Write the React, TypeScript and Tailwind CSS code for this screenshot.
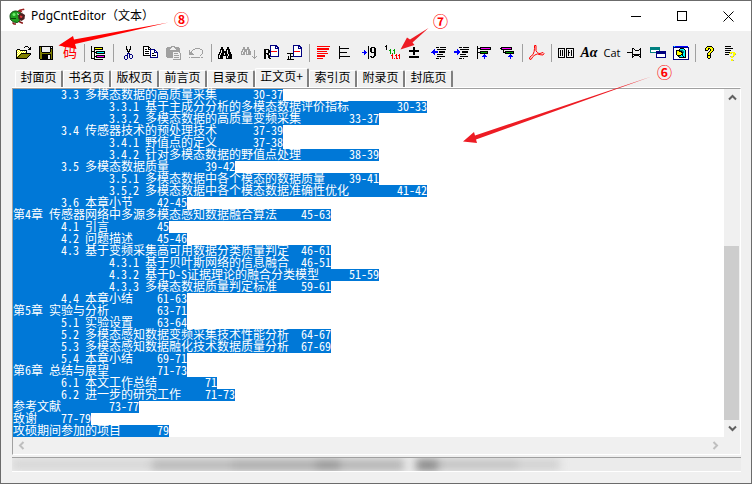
import { useState, type ReactNode } from "react";

const LINES = [
  "\t3.3 多模态数据的高质量采集\t30-37",
  "\t\t3.3.1 基于主成分分析的多模态数据评价指标\t30-33",
  "\t\t3.3.2 多模态数据的高质量变频采集\t33-37",
  "\t3.4 传感器技术的预处理技术\t37-39",
  "\t\t3.4.1 野值点的定义\t37-38",
  "\t\t3.4.2 针对多模态数据的野值点处理\t38-39",
  "\t3.5 多模态数据质量\t39-42",
  "\t\t3.5.1 多模态数据中各个模态的数据质量\t39-41",
  "\t\t3.5.2 多模态数据中各个模态数据准确性优化\t41-42",
  "\t3.6 本章小节\t42-45",
  "第4章 传感器网络中多源多模态感知数据融合算法\t45-63",
  "\t4.1 引言\t45",
  "\t4.2 问题描述\t45-46",
  "\t4.3 基于变频采集高可用数据分类质量判定\t46-61",
  "\t\t4.3.1 基于贝叶斯网络的信息融合\t46-51",
  "\t\t4.3.2 基于D-S证据理论的融合分类模型\t51-59",
  "\t\t4.3.3 多模态数据质量判定标准\t59-61",
  "\t4.4 本章小结\t61-63",
  "第5章 实验与分析\t63-71",
  "\t5.1 实验设置\t63-64",
  "\t5.2 多模态感知数据变频采集技术性能分析\t64-67",
  "\t5.3 多模态感知数据融化技术数据质量分析\t67-69",
  "\t5.4 本章小结\t69-71",
  "第6章 总结与展望\t71-73",
  "\t6.1 本文工作总结\t71",
  "\t6.2 进一步的研究工作\t71-73",
  "参考文献\t73-77",
  "致谢\t77-79",
  "攻硕期间参加的项目\t79",
];

/* Width of a line in a 12px monospaced face: half-width 6, full-width 12, tab stops every 48. */
function lineWidth(line: string) {
  let w = 0;
  for (const c of line) {
    if (c === "\t") w = (Math.floor(w / 48) + 1) * 48;
    else w += c.charCodeAt(0) > 255 ? 12 : 6;
  }
  return w;
}

const TABS = ["封面页", "书名页", "版权页", "前言页", "目录页", "正文页+", "索引页", "附录页", "封底页"];

const PALETTE: Record<string, string> = {
  K: "#000000",
  W: "#ffffff",
  Y: "#ffff00",
  O: "#808000",
  G: "#a0a0a0",
  L: "#f0f0f0",
  N: "#000080",
  B: "#0000ff",
  R: "#ff0000",
  M: "#ff00ff",
  C: "#00ffff",
  T: "#008080",
  E: "#00a000",
};

/* Draws a small bitmap glyph, one character per pixel. */
function Pixels({ rows }: { rows: string[] }) {
  return (
    <svg width="16" height="16" viewBox="0 0 16 16" shapeRendering="crispEdges" aria-hidden="true">
      {rows.flatMap((row, y) =>
        [...row].map((c, x) =>
          c === "." ? null : <rect key={`${x}-${y}`} x={x} y={y} width="1" height="1" fill={PALETTE[c]} />,
        ),
      )}
    </svg>
  );
}

const OPEN = [
  "................",
  ".........KKK....",
  "........K...K.K.",
  ".............KK.",
  ".KKK........KKK.",
  "KYWYKKKKKKK.....",
  "KWYWYWYWYWK.....",
  "KYWYWYWYWYK.....",
  "KWYWYKKKKKKKKKK.",
  "KYWYKOOOOOOOOOK.",
  "KWYKOOOOOOOOOK..",
  "KYKOOOOOOOOOK...",
  "KKOOOOOOOOOK....",
  "KKKKKKKKKKK.....",
];
const SAVE = [
  "................",
  "KKKKKKKKKKKKKK..",
  "KOKLLLLLLLLKLK..",
  "KOKLLLLLLLLKKK..",
  "KOKLLLLLLLLKOK..",
  "KOKLLLLLLLLKOK..",
  "KOKLLLLLLLLKOK..",
  "KOOKKKKKKKKOOK..",
  "KOOOOOOOOOOOOK..",
  "KOOKKKKKKKKKOK..",
  "KOOKKKKKKLLKOK..",
  "KOOKKKKKKLLKOK..",
  "KOOKKKKKKLLKOK..",
  "KOOKKKKKKLLKOK..",
  ".KKKKKKKKKKKKK..",
];
const TREE = [
  "................",
  "K...............",
  "K..KKKKKKKKK....",
  "K..KYYYYYYYK....",
  "K..KKKKKKKKK....",
  "K..K............",
  "KKKK.KKKKKKKKK..",
  "K..KKKCCCCCCCK..",
  "K..K.KKKKKKKKK..",
  "K..K............",
  "K..K.KKKKKKKKK..",
  "K..KKKMMMMMMMK..",
  "K..K.KKKKKKKKK..",
  "KKKK............",
  "...KKKKKKKKK....",
];
const CUT = [
  "................",
  "......K...K.....",
  "......K...K.....",
  "......K...K.....",
  "......KK.KK.....",
  ".......K.K......",
  ".......KKK......",
  "........K.......",
  ".......NNN......",
  ".......N.NNN....",
  ".....NNN.N..N...",
  "....N..N.N..N...",
  "....N..N.N..N...",
  "....N..N..NN....",
  ".....NN.........",
];
const COPY = [
  "................",
  "KKKKKK..........",
  "KWWWWKK.........",
  "KWWWWKWK........",
  "KWKKWKKNNNNN....",
  "KWWWWWWNWWWNN...",
  "KWKKKKWNWWWNWN..",
  "KWWWWWWNWWWNNNN.",
  "KWKKKKWNWKKWWWN.",
  "KWWWWWWNWWWWWWN.",
  "KKKKKKKNWKKKKWN.",
  ".......NWWWWWWN.",
  ".......NNNNNNNN.",
];
const PASTE = [
  "................",
  ".....GGGG.......",
  ".GGGGGLLGGGGG...",
  "GGGGGLLLLGGGGG..",
  "GGGGLLLLLLGGGG..",
  "GGGGGGGGGGGGGG..",
  "GGGGGGGGGGGGGG..",
  "GGGGGGGLLLLLLG..",
  "GGGGGGGLGGGGLLG.",
  "GGGGGGGLLLLLLLG.",
  "GGGGGGGLGGGGGLG.",
  "GGGGGGGLLLLLLLG.",
  ".GGGGGGLGGGGGLG.",
  ".......LLLLLLLG.",
  ".......GGGGGGGG.",
];
const UNDO = [
  "................",
  "................",
  "................",
  "......GGGGG.....",
  "....GG.....GG...",
  "G..G.........G..",
  "G.G..........G..",
  "GGG..........G..",
  "GGGG.........G..",
  "GGGGG.......G...",
  "...........G....",
  "................",
  "G.GGGGGGGGG.GG..",
  "................",
];
const FIND = [
  "................",
  "................",
  "...KK....KK.....",
  "...KK....KK.....",
  "..KKKK..KKKK....",
  "..KLKK..KLKK....",
  "..KLKKKKKLKK....",
  ".KKLKKKKKLKKK...",
  ".KLKKKLKKLKKK...",
  "KKLKKKLKKKLKKK..",
  "KLKKKKKKKKLKKK..",
  "KLKKK...KLKKKK..",
  "KLKKK...KLKKKK..",
  "KKKKK...KKKKKK..",
];
const FIND_NEXT = [
  "................",
  "................",
  "..GG..GG........",
  "..GG..GG........",
  ".GGGGGGGG.......",
  ".GLGGGLGG....G..",
  "GGLGGGLGGG...G..",
  "GLGG.GLGGG...G..",
  "GLGG.GLGGG...G..",
  "GGGG.GGGGG...G..",
  ".............G..",
  "...........G.G.G",
  "............GGG.",
  ".............G..",
];
const PAGE_R = [
  "......NNNNNNN...",
  "......NWWWWNNN..",
  "......NWWWWNWNN.",
  "......NWWWWNNNN.",
  "KKKKK.NWWWWWWWN.",
  "KK..KKNWWWWWWWN.",
  "KK..KKNRRRRRRWN.",
  "KK..KKNWWWWWWWN.",
  "KKKKK.NWWWWWWWN.",
  "KK.KK.NWWWWWWWN.",
  "KK..KKNWWWWWWWN.",
  "KK..KKNNNNNNNNN.",
  "KK..KK..........",
  "KK...KK.........",
];
const PAGE_Z = [
  "......NNNNNNN...",
  "......NWWWWNNN..",
  "......NWWWWNWNN.",
  "......NWWWWNNNN.",
  "......NWWWWWWWN.",
  "......NWWWWWWWN.",
  "......NRRRRRRWN.",
  "......NWWWWWWWN.",
  "KKKKKKNWWWWWWWN.",
  "...K..NWWWWWWWN.",
  "...K..NWWWWWWWN.",
  ".K.KKKNNNNNNNNN.",
  ".K.K............",
  ".K.K............",
  "KKKKKKK.........",
];
const RED_LINES = [
  "................",
  ".RRRRRRRRRRRRR..",
  "................",
  ".RRRRRRRRRRRR...",
  ".RRRRRRRRRRRR...",
  "................",
  ".RRRRRRRRRR.....",
  "................",
  ".RRRRRRRRRRR....",
  "................",
  ".RRRRRRRR.......",
  ".RRRRRRRR.......",
  "................",
  ".RRRRRR.........",
];
const LIST = [
  "................",
  "K...............",
  "K...............",
  "KKKKKKKKKK......",
  "K...............",
  "K...............",
  "K...............",
  "KKKKKKKK........",
  "K...............",
  "K...............",
  "K...............",
  "KKKKKKKKKKK.....",
  "K...............",
  "K...............",
];
const ARROW_NINE = [
  "................",
  "......K.........",
  "......K..KKKK...",
  "......K.KK..KK..",
  "......K.KK..KK..",
  "..B...K.KK..KK..",
  "..BB..K.KK..KK..",
  "BBBBB.K..KKKKK..",
  "..BB..K.....KK..",
  "..B...K.....KK..",
  "......K.....KK..",
  "......K.KK.KK...",
  "......K..KKK....",
  "......K.........",
];
const LEVELS = [
  ".K..............",
  "KK..............",
  ".K..............",
  ".K..............",
  ".K...E...E......",
  "....EE..EE......",
  ".....E...E......",
  ".....E...E......",
  ".....E.E.E......",
  ".......R...R..R.",
  "......RR..RR.RR.",
  ".......R...R..R.",
  ".......R...R..R.",
  ".......R.R.RR.R.",
];
const PLUS_MINUS = [
  "................",
  "................",
  ".....KK.........",
  ".....KK.........",
  ".....KK.........",
  ".KKKKKKKKKK.....",
  ".KKKKKKKKKK.....",
  ".....KK.........",
  ".....KK.........",
  ".....KK.........",
  "................",
  ".KKKKKKKKKK.....",
  ".KKKKKKKKKK.....",
];
const OUTDENT = [
  "................",
  "................",
  ".....KKK.KKKKKK.",
  "................",
  "...B..KKKKKKKKK.",
  "..BB............",
  ".BBBBBB.KKKKKK..",
  "BBBBBBB.KKKKKK..",
  "..BB............",
  "...B..KKKKKK....",
  "................",
  "......KKKKKKKK..",
  "................",
  ".....KKK.K......",
];
const INDENT = [
  "................",
  "................",
  ".....KKK.KKKKKK.",
  "................",
  "...B..KKKKKKKKK.",
  "...BB...........",
  "BBBBBB..KKKKKK..",
  "BBBBBB..KKKKKK..",
  "...BB...........",
  "...B..KKKKKK....",
  "................",
  "......KKKKKKKK..",
  "................",
  ".....KKK.K......",
];
const BARS_IN = [
  "................",
  "K...............",
  "K..KKKKKKKKKKK..",
  "KKKKMMMMMMMMMK..",
  "K..KKKKKKKKKKK..",
  "K...............",
  "K..KKKKKKKK.....",
  "KKKKEEEEEEK.....",
  "K..KKKKKKKK.....",
  "K......B........",
  "K.....BBB.......",
  "K....BBBBB......",
  "K......B........",
  "K......B........",
];
const BARS_OUT = [
  "................",
  "................",
  ".KKKKKKKKKKK....",
  "KKMMMMMMMMMK....",
  ".KKKKKKKKKKK....",
  "...K............",
  "...K.KKKKKKKKK..",
  "...KKKEEEEEEEK..",
  ".....KKKKKKKKK..",
  "..........B.....",
  ".........BBB....",
  "........BBBBB...",
  "..........B.....",
  "..........B.....",
];
const COLUMNS = [
  "................",
  "................",
  "................",
  "KKKKKKK.KKKKKKKK",
  "K.....K.K......K",
  "K.K.K.K.K.K..K.K",
  "K.K.K.K.K.K..K.K",
  "K.K.K.K.K.KK.K.K",
  "K.K.K.K.K.K..K.K",
  "K.K.K.K.K.K..K.K",
  "K.K.K.K.K.K..K.K",
  "K.....K.K......K",
  "KKKKKKK.KKKKKKKK",
];
const PIN = [
  "................",
  "................",
  "................",
  ".....KK......K..",
  ".....K.K....KK..",
  ".....K..KKKK.K..",
  ".....K.......K..",
  "KKKKKK.......K..",
  ".....K.......K..",
  ".....KKKKKKKKK..",
  ".....K.KKKKK.K..",
  ".....KK.....KK..",
  ".....K.......K..",
];
const WINDOWS = [
  "................",
  "................",
  "TTTTTTTTTT......",
  "TTTTTTTTTT......",
  "TTTTTTTTTT......",
  "TWWWWWWWWT......",
  "TWWWWWNNNNNNNNNN",
  "TTTTTTNNNNNNNNNN",
  "......NNNNNNNNNN",
  "......NWWWWWWWWN",
  "......NWWWWWWWWN",
  "......NWWWWWWWWN",
  "......NNNNNNNNNN",
];
const PREVIEW = [
  "................",
  "BCBBBBBBBBBBBBBW",
  "NNNNNNNNNNNNNNNN",
  "NWWWWWWKKKKWWWWN",
  "NWWWWWKCCCCKWWWN",
  "NWWKKKKTTTCCKWWN",
  "NWWKYYKKKTTCKWWN",
  "NWWKYYYYKKTCKWWN",
  "NWWKYYYYYKCCKWWN",
  "NWWKYYYYKKCCKWWN",
  "NWWWKKKKCKCCKWWN",
  "NWWWWKTCCCKCKWWN",
  "NWWWWWKKKKKKKWWN",
  "NWWWWWWWWWWWWWWN",
  "NNNNNNNNNNNNNNNN",
];
const HELP = [
  "................",
  ".....KKKKK......",
  "....KYYYYYK.....",
  "...KYYKKYYYK....",
  "...KYYK.KYYK....",
  "...KKK..KYYK....",
  ".......KYYK.....",
  "......KYYK......",
  ".....KYYK.......",
  ".....KYYK.......",
  ".....KKKK.......",
  ".....KYYK.......",
  ".....KYYK.......",
  "......KK........",
];
const HELP_LIST = [
  "................",
  "KKKKKK..........",
  "................",
  "KKKKKKKK........",
  "................",
  "KKKKKK..........",
  "................",
  "KKKKKYYYYY......",
  "....YYG.YYY.....",
  "KKKK....YYG.....",
  "........YY......",
  ".....GYYG.......",
  "......YY........",
  "................",
  "......YY........",
  "......YYG.......",
];

type Tool = { label: string; icon: ReactNode } | null;

const pix = (rows: string[]) => <Pixels rows={rows} />;

const TOOLS: Tool[] = [
  { label: "打开", icon: pix(OPEN) },
  { label: "保存", icon: pix(SAVE) },
  {
    label: "编码",
    icon: <span className="pb-1 font-['Noto_Sans_CJK_SC',sans-serif] text-sm leading-4 text-[#ff0000]">码</span>,
  },
  null,
  { label: "目录树", icon: pix(TREE) },
  null,
  { label: "剪切", icon: pix(CUT) },
  { label: "复制", icon: pix(COPY) },
  { label: "粘贴", icon: pix(PASTE) },
  { label: "撤销", icon: pix(UNDO) },
  null,
  { label: "查找", icon: pix(FIND) },
  { label: "查找下一个", icon: pix(FIND_NEXT) },
  { label: "替换", icon: pix(PAGE_R) },
  { label: "正则替换", icon: pix(PAGE_Z) },
  null,
  { label: "排版", icon: pix(RED_LINES) },
  { label: "列表", icon: pix(LIST) },
  { label: "页码对齐", icon: pix(ARROW_NINE) },
  { label: "自动分级", icon: pix(LEVELS) },
  { label: "页码加减", icon: pix(PLUS_MINUS) },
  { label: "减少缩进", icon: pix(OUTDENT) },
  { label: "增加缩进", icon: pix(INDENT) },
  { label: "升级", icon: pix(BARS_IN) },
  { label: "降级", icon: pix(BARS_OUT) },
  null,
  {
    label: "PDF",
    icon: (
      <svg width="16" height="16" viewBox="0 0 16 16" fill="none" stroke="#f00" strokeWidth="1" aria-hidden="true">
        <path d="M5.500.500h1.500v5C8 8 9.500 8.500 11 8.500l3-1 1 1-1 1.500c-2 0-4-.5-5.500-1-2 .5-3.500 1.500-4.500 2.500l-2 3-1.500-.5.500-2 3-2.500c1-2 1.500-4 1.500-6z" />
      </svg>
    ),
  },
  null,
  { label: "分栏", icon: pix(COLUMNS) },
  {
    label: "字体",
    icon: <span className="font-['Liberation_Serif',serif] text-sm font-bold italic leading-4 text-black">Aα</span>,
  },
  {
    label: "目录",
    icon: <span className="font-['Open_Sans',sans-serif] text-[11px] leading-4 text-black">Cat</span>,
  },
  { label: "置顶", icon: pix(PIN) },
  { label: "窗口", icon: pix(WINDOWS) },
  { label: "预览", icon: pix(PREVIEW) },
  null,
  { label: "帮助", icon: pix(HELP) },
  { label: "帮助目录", icon: pix(HELP_LIST) },
];

function AppIcon() {
  return (
    <svg width="17" height="17" viewBox="0 0 17 17" aria-hidden="true">
      <path d="M1 8.500C1 5 3.500 3 7 3l4 1 1.500 3-1 5-3 2.500-4-.5-3-2.500z" fill="#22a022" stroke="#0a4a0a" />
      <path d="M9 6l4-1 3 2-.5 4-3 2-3-2z" fill="#4a2020" />
      <path d="M8.500 3l2-1.500L15 .5l.5 1.500-3 .5 1 2-3-.5z" fill="#9c2020" />
      <path d="M11 7.500l2.500.5-.5 2-2-.5z" fill="#e03838" />
      <path d="M3.500 14.500l1.500 1.500h2M10 13.500l3 1.500h1" fill="none" stroke="#8a1818" strokeWidth="1.500" />
      <circle cx="5" cy="6.500" r="1.500" fill="#6cf06c" />
      <path d="M2 10.500h5" stroke="#0a4a0a" />
      <path d="M8.500 5.500l1 1.500" stroke="#ffffff" />
    </svg>
  );
}

function Chevron({ d, dim }: { d: string; dim?: boolean }) {
  return (
    <svg width="9" height="9" viewBox="0 0 9 9" fill="none" stroke={dim ? "#bfbfbf" : "#606060"} strokeWidth="2" aria-hidden="true">
      <path d={d} />
    </svg>
  );
}

function TitleBar() {
  return (
    <header className="flex h-[30px] items-center bg-white pl-2">
      <AppIcon />
      <h1 className="ml-[5px] font-['Noto_Sans','Noto_Sans_CJK_SC',sans-serif] text-xs font-normal text-black">
        PdgCntEditor（文本）
      </h1>
      <div className="ml-auto flex h-full">
        <button aria-label="最小化" className="flex w-[46px] items-center justify-center">
          <svg width="11" height="11" shapeRendering="crispEdges"><path d="M0 5.500h10" stroke="#000" /></svg>
        </button>
        <button aria-label="最大化" className="flex w-[46px] items-center justify-center">
          <svg width="11" height="11" shapeRendering="crispEdges"><path d="M.5.500h9v9h-9z" fill="none" stroke="#000" /></svg>
        </button>
        <button aria-label="关闭" className="flex w-[46px] items-center justify-center">
          <svg width="11" height="11"><path d="M.5.500l10 10M10.500.500l-10 10" stroke="#000" /></svg>
        </button>
      </div>
    </header>
  );
}

function Toolbar() {
  return (
    <div role="toolbar" aria-label="工具栏" className="flex h-[37px] items-start overflow-hidden pl-[11px] pt-[10px]">
      {TOOLS.map((tool, i) =>
        tool ? (
          <button
            key={tool.label}
            aria-label={tool.label}
            className="flex h-6 w-[23px] shrink-0 items-center justify-start whitespace-nowrap pl-1"
          >
            <span className="flex w-4 shrink-0 justify-center">{tool.icon}</span>
          </button>
        ) : (
          <span key={i} className="flex h-6 w-[6px] shrink-0 items-center justify-center">
            <span className="h-[18px] w-px bg-[#a0a0a0]" />
          </span>
        ),
      )}
    </div>
  );
}

function TabStrip({ active, onPick }: { active: number; onPick: (i: number) => void }) {
  return (
    <div role="tablist" className="flex h-[19px] items-end pl-[14px] font-['Noto_Sans_CJK_SC',sans-serif] text-xs text-black">
      {TABS.map((name, i) => (
        <button
          key={name}
          role="tab"
          aria-selected={i === active}
          onClick={() => onPick(i)}
          className={
            i === active
              ? "h-[19px] w-[54px] rounded-t-xs border-l border-t border-r-2 border-l-white border-t-white border-r-[#808080] pb-1 leading-[14px]"
              : "h-[17px] w-12 rounded-t-xs border-l border-t border-r-2 border-l-white border-t-white border-r-[#808080] pb-1 leading-3"
          }
        >
          {name}
        </button>
      ))}
    </div>
  );
}

function Editor() {
  return (
    <div className="border border-b-white border-l-[#a0a0a0] border-r-white border-t-[#a0a0a0]">
      <div className="flex">
        <div className="grid min-w-0 flex-1 bg-white">
          <div aria-hidden="true" className="col-start-1 row-start-1">
            {LINES.map((line) => (
              <div key={line} className="h-3 bg-[#0078d7]" style={{ width: lineWidth(line) }} />
            ))}
          </div>
          <textarea
            aria-label="目录文本"
            wrap="off"
            rows={LINES.length}
            spellCheck={false}
            defaultValue={LINES.join("\n")}
            className="relative col-start-1 row-start-1 -mt-px block w-full resize-none overflow-hidden bg-transparent p-0 font-['Noto_Sans_Mono_CJK_SC','Liberation_Mono',monospace] text-xs font-medium leading-3 text-white outline-none [tab-size:48px]"
          />
        </div>
        <div className="flex w-4 flex-col bg-[#f0f0f0]">
          <button aria-label="向上滚动" className="flex h-[17px] items-center justify-center">
            <Chevron d="M1 6.500l3.500-3.500L8 6.500" />
          </button>
          <div className="flex flex-1 flex-col justify-end">
            <div className="h-[174px] w-[15px] bg-[#cdcdcd]" />
          </div>
          <button aria-label="向下滚动" className="flex h-[17px] items-center justify-center">
            <Chevron d="M1 2.500l3.500 3.500L8 2.500" />
          </button>
        </div>
      </div>
      <div className="flex h-[17px] items-center justify-between pl-1 pr-5">
        <button aria-label="向左滚动"><Chevron dim d="M6.500 1L3 4.500 6.500 8" /></button>
        <button aria-label="向右滚动"><Chevron dim d="M2.500 1L6 4.500 2.500 8" /></button>
      </div>
    </div>
  );
}

function StatusBar() {
  return (
    <footer className="mt-[2px] h-[15px] overflow-hidden border-b border-t border-b-white border-t-[#a0a0a0] bg-[#ebebeb]">
      <div className="flex h-full items-center blur-[4px]">
        <span className="h-[11px] w-[140px] bg-[#d6d6d6]" />
        <span className="h-[12px] w-[80px] bg-[#b8b8b8]" />
        <span className="h-[12px] w-[84px] bg-[#acacac]" />
        <span className="h-[12px] w-[24px] bg-[#969696]" />
        <span className="h-[12px] w-[64px] bg-[#b4b4b4]" />
        <span className="ml-3 h-[12px] w-[22px] bg-[#888888]" />
        <span className="h-[11px] w-[80px] bg-[#c2c2c2]" />
        <span className="h-[11px] w-[42px] bg-[#d0d0d0]" />
      </div>
    </footer>
  );
}

function Callouts() {
  return (
    <div className="pointer-events-none absolute -left-px -top-px font-['Noto_Sans_CJK_SC',sans-serif] text-[15px] font-bold leading-4 text-[#ff0000]">
      <svg width="752" height="160" aria-hidden="true">
        <path d="M168.500 22.500L74 39.500 73 36 58.500 45.500 76.500 49 75 44z" fill="#ff0000" />
        <path d="M428.500 28L410 39.500 407 37.500 400.500 49.500 414.500 45 412.500 42.500z" fill="#ed1c24" />
        <path d="M651.500 76.500L475 135.500 474 132 463 141.500 477 143 476 139.500z" fill="#ed1c24" />
      </svg>
      <span className="absolute left-[174px] top-[11px]">⑧</span>
      <span className="absolute left-[433px] top-[13px]">⑦</span>
      <span className="absolute left-[657px] top-[64px]">⑥</span>
    </div>
  );
}

export default function App() {
  const [active, setActive] = useState(5);
  return (
    <div className="relative flex min-h-screen flex-col overflow-hidden border border-[#6b6b6b] bg-[#f0f0f0]">
      <TitleBar />
      <Toolbar />
      <TabStrip active={active} onPick={setActive} />
      <main className="ml-[11px] mr-[10px] border-t border-white">
        <Editor />
        <StatusBar />
      </main>
      <Callouts />
    </div>
  );
}
